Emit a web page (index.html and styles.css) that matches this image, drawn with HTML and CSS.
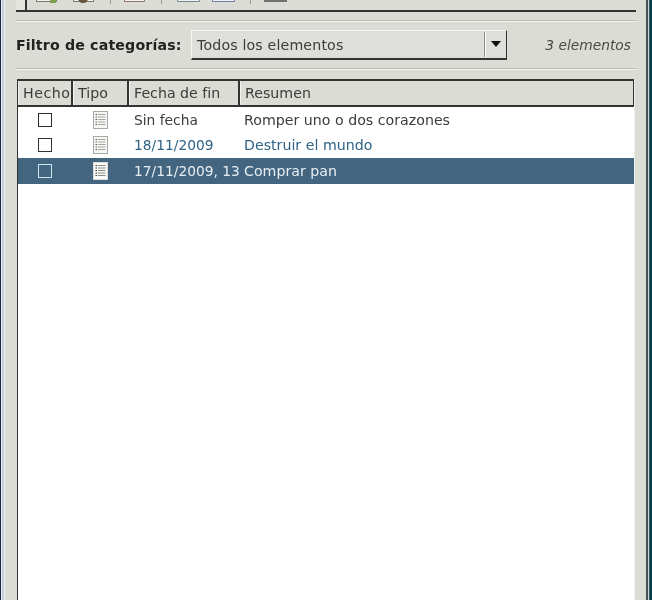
FILE: index.html
```html
<!DOCTYPE html>
<html lang="es">
<head>
<meta charset="utf-8">
<title>Tareas</title>
<link rel="stylesheet" href="styles.css">
</head>
<body>
<div class="window">
  <div class="edge-left"></div>
  <main class="content">
    <div class="toolbar">
      <div class="handle"></div>
      <div class="tools">
        <svg class="tool tool-new" width="21" height="4" viewBox="0 0 21 4"><path d="M.5 0v1.500h20V0" fill="#f4f4f0" stroke="#77776f"/><rect x="14" y="0" width="6" height="3" fill="#7fa04c"/></svg>
        <svg class="tool tool-open" width="21" height="4" viewBox="0 0 21 4"><path d="M.5 0v1.500h20V0" fill="#f4f4f0" stroke="#77776f"/><path d="M5 0h10l-3 3H8z" fill="#6b5a42"/></svg>
        <span class="tool-sep"></span>
        <svg class="tool tool-del" width="21" height="4" viewBox="0 0 21 4"><path d="M.5 0v1.500h20V0" fill="#f4f4f0" stroke="#94706c"/></svg>
        <span class="tool-sep"></span>
        <svg class="tool tool-a" width="23" height="4" viewBox="0 0 23 4"><path d="M.5 0v1.500h22V0" fill="#eef0f2" stroke="#7c8794"/></svg>
        <svg class="tool tool-b" width="23" height="4" viewBox="0 0 23 4"><path d="M.5 0v1.500h22V0" fill="#eef0f6" stroke="#6f7fa8"/></svg>
        <span class="tool-sep tool-sep-last"></span>
        <svg class="tool tool-c" width="23" height="4" viewBox="0 0 23 4"><rect width="23" height="2" fill="#6f6f6b"/></svg>
      </div>
    </div>
    <hr class="rule">
    <div class="filter">
      <label class="filter-label">Filtro de categorías:</label>
      <div class="combo">
        <span class="combo-text">Todos los elementos</span>
        <span class="combo-btn"><svg width="12" height="7" viewBox="0 0 12 7"><path d="M1 0h10L6 6z" fill="#111"/></svg></span>
      </div>
      <span class="count">3 elementos</span>
    </div>
    <hr class="rule">
    <div class="table">
      <div class="row head">
        <div class="c c-done">Hecho</div>
        <div class="c c-type">Tipo</div>
        <div class="c c-date">Fecha de fin</div>
        <div class="c c-sum">Resumen</div>
      </div>
      <div class="row">
        <div class="c c-done"><span class="check"></span></div>
        <div class="c c-type"><svg class="doc" width="15" height="18" viewBox="0 0 15 18"><rect x=".5" y=".5" width="14" height="17" fill="#f7f7f5" stroke="#a9a9a4"/><path d="M2.500 3.500h1.500M2.500 6h1.500M2.500 8.500h1.500M2.500 11h1.500M2.500 13.500h1.500" stroke="#55554f"/><path d="M5 3.500h7.500M5 6h7.500M5 8.500h7.500M5 11h7.500M5 13.500h7.500" stroke="#a5a5a0"/></svg></div>
        <div class="c c-date">Sin fecha</div>
        <div class="c c-sum">Romper uno o dos corazones</div>
      </div>
      <div class="row upcoming">
        <div class="c c-done"><span class="check"></span></div>
        <div class="c c-type"><svg class="doc" width="15" height="18" viewBox="0 0 15 18"><rect x=".5" y=".5" width="14" height="17" fill="#f7f7f5" stroke="#a9a9a4"/><path d="M2.500 3.500h1.500M2.500 6h1.500M2.500 8.500h1.500M2.500 11h1.500M2.500 13.500h1.500" stroke="#55554f"/><path d="M5 3.500h7.500M5 6h7.500M5 8.500h7.500M5 11h7.500M5 13.500h7.500" stroke="#a5a5a0"/></svg></div>
        <div class="c c-date">18/11/2009</div>
        <div class="c c-sum">Destruir el mundo</div>
      </div>
      <div class="row selected">
        <div class="c c-done"><span class="check"></span></div>
        <div class="c c-type"><svg class="doc" width="15" height="18" viewBox="0 0 15 18"><rect x=".5" y=".5" width="14" height="17" fill="#fbfbfa" stroke="#d8dcde"/><path d="M2.500 3.500h1.500M2.500 6h1.500M2.500 8.500h1.500M2.500 11h1.500M2.500 13.500h1.500" stroke="#33332f"/><path d="M5 3.500h7.500M5 6h7.500M5 8.500h7.500M5 11h7.500M5 13.500h7.500" stroke="#888884"/></svg></div>
        <div class="c c-date">17/11/2009, 13</div>
        <div class="c c-sum">Comprar pan</div>
      </div>
    </div>
  </main>
  <div class="edge-right"></div>
</div>
</body>
</html>
```
FILE: styles.css
```css
* { box-sizing: border-box; }
html, body { margin: 0; height: 600px; overflow: hidden; }
body {
  background: #dcdcd6;
  font-family: "DejaVu Sans", sans-serif;
  font-size: 14.2px;
  color: #3c3c38;
}
.window { display: flex; height: 600px; filter: blur(.45px); }
.edge-left {
  width: 5px;
  flex: none;
  background: linear-gradient(to right, #1c2a3a 0 1px, #e8ecf4 1px 2px, #c6cfe4 2px 4px, #eef0f0 4px);
}
.content { flex: 1; min-width: 0; padding-left: 11px; }
.edge-right {
  width: 7px;
  flex: none;
  background: linear-gradient(to right, #dcdcd6 0 1px, #4a5058 1px 3px, #cfd4d8 3px 4px, #345a70 4px 5px, #0a3a44 5px);
}
.toolbar {
  width: 620px;
  height: 12px;
  display: flex;
  border-bottom: 2px solid #33332f;
}
.handle {
  width: 11px;
  flex: none;
  border-right: 2px solid #33332f;
  background: #e4e4de;
}
.tools { display: flex; align-items: flex-start; padding-left: 9px; }
.tool { display: block; flex: none; }
.tool-open { margin-left: 16px; }
.tool-del { margin-left: 13px; }
.tool-a { margin-left: 15px; }
.tool-b { margin-left: 12px; }
.tool-c { margin-left: 13px; }
.tool-sep {
  width: 1px;
  height: 4px;
  flex: none;
  background: #9a9a94;
  margin-left: 16px;
}
.tool-sep-last { margin-left: 15px; }
.rule {
  width: 620px;
  height: 2px;
  margin: 8px 0 0;
  border: 0;
  border-top: 1px solid #b9b9b3;
  border-bottom: 1px solid #f4f4f0;
}
.filter {
  width: 620px;
  height: 30px;
  margin-top: 8px;
  display: flex;
  align-items: center;
}
.filter-label { font-weight: bold; width: 175px; flex: none; color: #222220; letter-spacing: .15px; }
.combo {
  width: 316px;
  height: 30px;
  flex: none;
  display: flex;
  align-items: center;
  justify-content: space-between;
  background: #dededa;
  border-top: 1px solid #f6f6f2;
  border-left: 1px solid #f6f6f2;
  border-right: 1px solid #33332f;
  border-bottom: 2px solid #33332f;
}
.combo-text { padding-left: 5px; letter-spacing: .15px; }
.combo-btn {
  width: 22px;
  height: 25px;
  display: flex;
  align-items: center;
  justify-content: center;
  border-left: 1px solid #8c8c86;
  box-shadow: inset 1px 0 0 #f8f8f4;
}
.count { font-style: italic; font-size: 13.8px; margin-left: auto; padding-right: 5px; color: #4a4a45; }
.table {
  width: 618px;
  height: 530px;
  margin: 9px 0 0 1px;
  background: #fff;
  border-left: 1px solid #33332f;
  border-right: 1px solid #eeeeea;
}
.row { display: flex; height: 25.500px; align-items: center; }
.c { height: 100%; display: flex; align-items: center; white-space: nowrap; overflow: hidden; padding-left: 5px; flex: none; }
.c-done { width: 54px; justify-content: center; padding-left: 0; }
.c-type { width: 56px; }
.c-date { width: 111px; font-size: 13.8px; }
.c-sum { flex: 1; padding-left: 4px; }
.head {
  height: 28px;
  background: #dcdcd6;
  border-top: 2px solid #33332f;
  border-bottom: 2px solid #33332f;
  border-right: 1px solid #33332f;
}
.head .c { border-right: 2px solid #33332f; box-shadow: inset 1px 0 0 #f2f2ee; }
.head .c-done { width: 55px; justify-content: flex-start; padding-left: 5px; letter-spacing: .5px; }
.head .c-type { width: 56px; }
.head .c-date { font-size: 14.2px; }
.head .c-sum { border-right: 0; padding-left: 5px; }
.row:not(.head) .c-type { justify-content: center; padding-left: 0; margin-left: 1px; width: 55px; }
.row:not(.head) .c-date { margin-left: 1px; }
.check {
  width: 14px;
  height: 14px;
  border: 1.500px solid #2a2a28;
  background: #fff;
}
.doc { display: block; }
.upcoming { color: #2e6386; }
.upcoming .check { border-color: #333; }
.selected { background: #446580; color: #e6eef2; }
.selected .check { background: #446580; border-color: #cfe4ee; }
```
